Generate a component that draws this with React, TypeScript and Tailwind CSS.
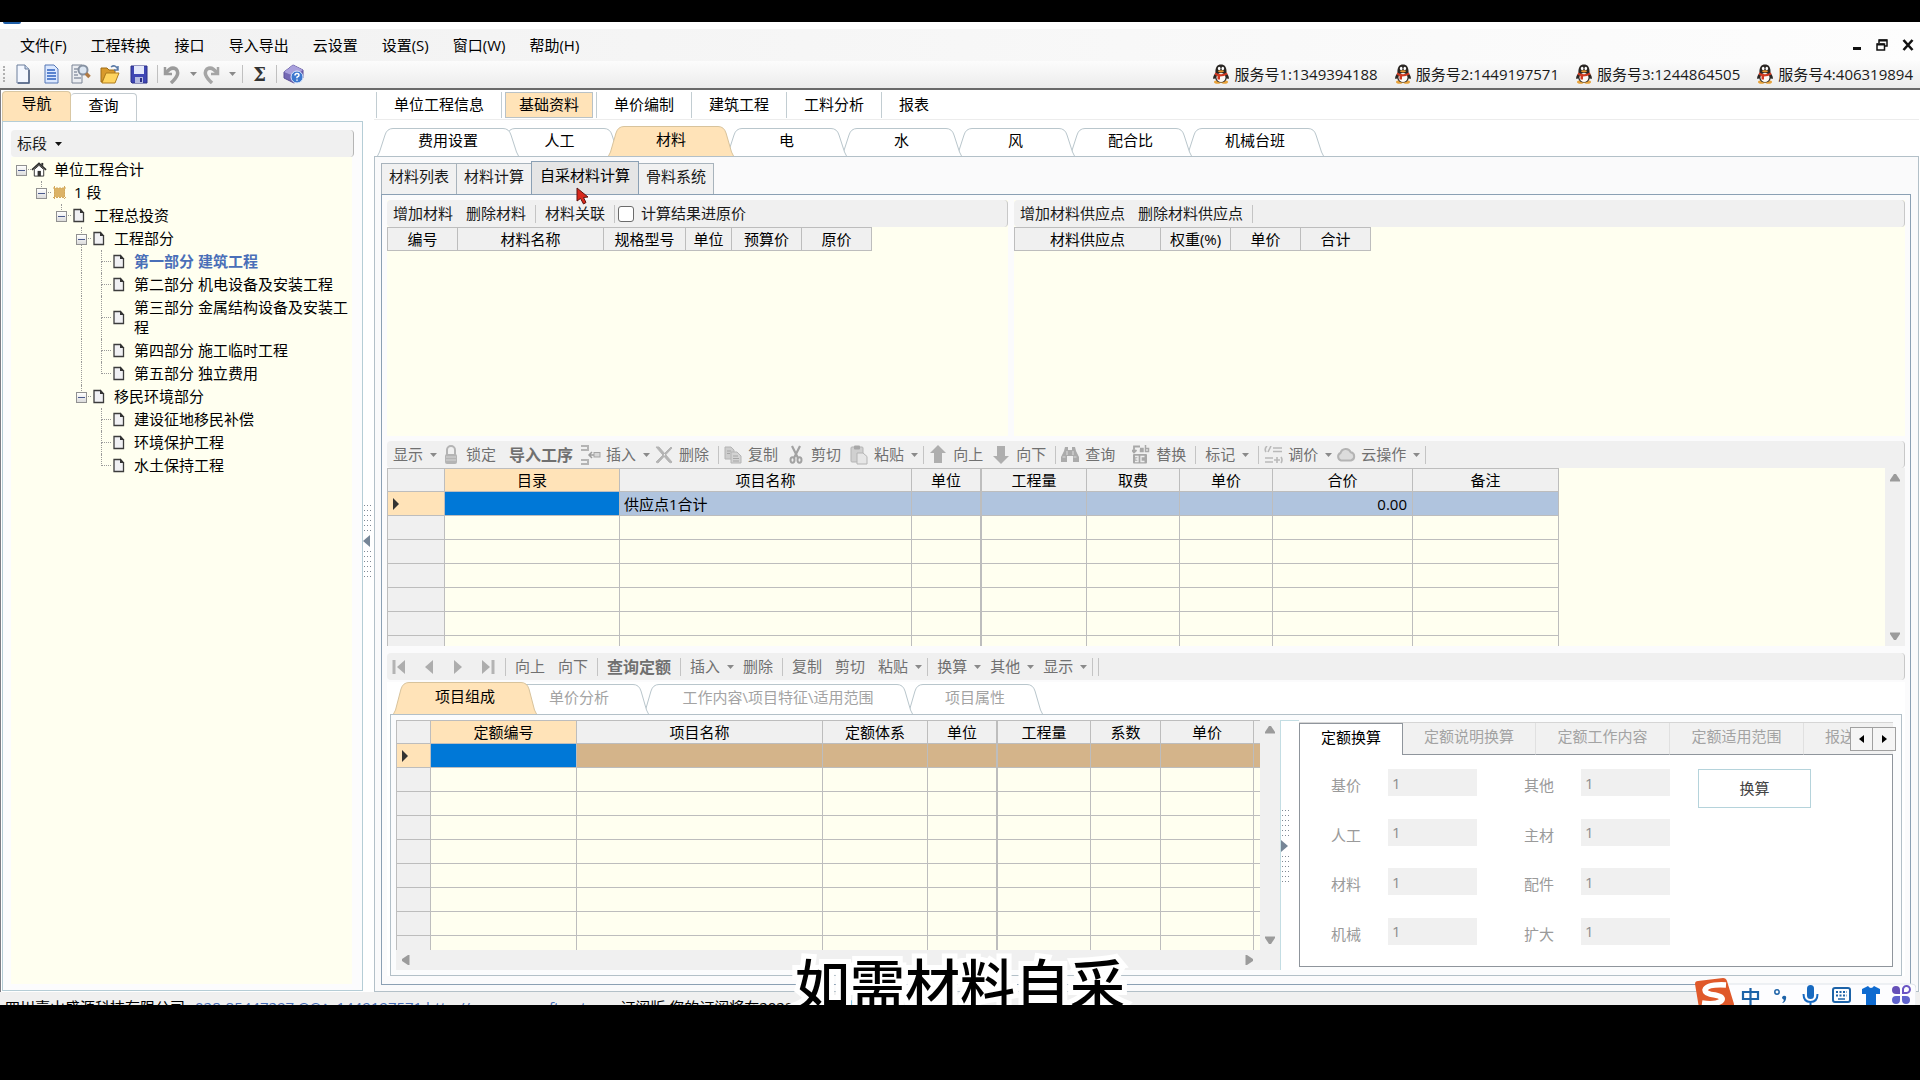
import { ReactNode, useState } from "react";
import clsx from "clsx";

const GRID_LINE = "border-[#bdbdbd]";

/* ---------- small pieces ---------- */

function Caret({ dark }: { dark?: boolean }) {
  return (
    <svg width="7" height="4" viewBox="0 0 7 4" className="shrink-0">
      <path d="M0 0H7L3.5 4Z" fill={dark ? "#111" : "#8a8a8a"} />
    </svg>
  );
}

function Sep() {
  return <span className="mx-[2px] h-[18px] w-px shrink-0 bg-[#c4c4c4]" />;
}

type ToolProps = { children: string; icon?: ReactNode; menu?: boolean; bold?: boolean; dark?: boolean; className?: string };

function Tool({ children, icon, menu, bold, dark, className }: ToolProps) {
  return (
    <button
      className={clsx(
        "flex h-full shrink-0 items-center whitespace-nowrap",
        icon ? "pl-px" : "pl-[6px]",
        menu ? "pr-[2px]" : "pr-[6px]",
        bold ? "text-[16px] font-bold" : "text-[15px]",
        dark ? "text-[#1a1a1a]" : "text-[#707070]",
        className,
      )}
    >
      {icon && <span className="mr-[5px] flex w-5 justify-center">{icon}</span>}
      {children}
      {menu && <span className="ml-[7px]"><Caret /></span>}
    </button>
  );
}

function Toolbar({ children, className }: { children: ReactNode; className?: string }) {
  return (
    <div className={clsx("flex h-[27px] shrink-0 items-center gap-px overflow-hidden rounded-sm border-r border-[#c8c8c8] bg-[#f0f0f0]", className)}>
      {children}
    </div>
  );
}

/* ---------- icons ---------- */

const gray = "#b4b4b4";

const LockIcon = () => (
  <svg width="14" height="20" viewBox="0 0 14 20">
    <path d="M3 10V5a4 4 0 0 1 8 0v5" fill="none" stroke={gray} strokeWidth="2" />
    <rect x="1" y="9" width="12" height="10" rx="2" fill={gray} />
    <path d="M2 12H12M2 15H12" stroke="#d6d6d6" />
  </svg>
);
const InsertIcon = () => (
  <svg width="20" height="20" viewBox="0 0 20 20">
    <path d="M0 1h7v4H0M0 15h7v4H0" fill="none" stroke={gray} strokeWidth="2" />
    <path d="M9 10h5M11 7l-3 3 3 3" fill="none" stroke="#9d9d9d" strokeWidth="1.5" />
    <rect x="13" y="7.500" width="6" height="4.500" fill="#d8d8d8" stroke="#a5a5a5" />
  </svg>
);
const CrossIcon = () => (
  <svg width="18" height="18" viewBox="0 0 18 18">
    <path d="M1 1L4 1 17 16 16 17 14 16ZM16 1L9 8 1 16 3 17 10 9.500 17 2Z" fill={gray} stroke={gray} />
  </svg>
);
const CopyIcon = () => (
  <svg width="18" height="18" viewBox="0 0 18 18">
    <path d="M1 1h6l3 3v9H1z" fill="#cdcdcd" stroke={gray} />
    <path d="M7 6h6l4 4v7H7z" fill="#d3d3d3" stroke={gray} />
    <path d="M9 10h5M9 12.500h6M9 15h6M3 5h4M3 7.500h3" stroke="#a5a5a5" />
  </svg>
);
const CutIcon = () => (
  <svg width="14" height="19" viewBox="0 0 14 19">
    <path d="M3 1L9 13M11 1L5 13" stroke="#a2a2a2" strokeWidth="2.200" />
    <ellipse cx="3.500" cy="15" rx="2" ry="2.700" fill="none" stroke="#a2a2a2" strokeWidth="2" />
    <ellipse cx="10.500" cy="15" rx="2" ry="2.700" fill="none" stroke="#a2a2a2" strokeWidth="2" />
  </svg>
);
const PasteIcon = () => (
  <svg width="18" height="20" viewBox="0 0 18 20">
    <rect x="1" y="2" width="12" height="15" rx="1" fill="#d0d0d0" stroke={gray} />
    <rect x="4" y="0.500" width="6" height="4" rx="1" fill="#a8a8a8" />
    <path d="M7 8h6l4 3.500V19H7z" fill="#e6e6e6" stroke={gray} />
  </svg>
);
const ArrowIcon = ({ down }: { down?: boolean }) => (
  <svg width="16" height="19" viewBox="0 0 16 19">
    <path d={down ? "M8 19L0 11H4V1H12V11H16Z" : "M8 0L16 8H12V18H4V8H0Z"} fill="#aeaeae" />
  </svg>
);
const BinocularsIcon = () => (
  <svg width="18" height="17" viewBox="0 0 18 17">
    <path d="M4 1h3v3h4V1h3l1 4 3 6v5h-6v-6H8.500H6v6H0v-5L3 5z" fill="#ababab" />
    <path d="M1.500 11h3M12.500 11h3M6 5v4M12 5v4" stroke="#dedede" />
  </svg>
);
const ReplaceIcon = () => (
  <svg width="19" height="19" viewBox="0 0 19 19">
    <path d="M8 1.500H2V7M0 5l2 2.500L4.500 5" fill="none" stroke="#a8a8a8" strokeWidth="1.800" />
    <rect x="1" y="9" width="14" height="9.500" rx="1" fill="#a8a8a8" />
    <path d="M3 11.500h3v5H3M3.500 14H6M12.500 11.500H9v5h3.500" fill="none" stroke="#eee" strokeWidth="1.300" />
    <path d="M8 3.500h3v3H8.500V5H11M13.500 0v6.500h3v-3h-3" fill="none" stroke="#a8a8a8" strokeWidth="1.500" />
  </svg>
);
const PriceIcon = () => (
  <svg width="19" height="18" viewBox="0 0 19 18">
    <path d="M3 0Q0 3 2 6M7 0L4 6M9 2H18M9 5.500H18M1 12H9M1 16H9M10 14H16M13 11V17M17 11q2 3 0 6" fill="none" stroke="#b9b9b9" strokeWidth="1.600" />
  </svg>
);
const CloudIcon = () => (
  <svg width="20" height="15" viewBox="0 0 20 15">
    <path d="M5 13.500a4 4 0 0 1-.5-7.500 5.500 5.500 0 0 1 10.300-.7 4.200 4.200 0 0 1 .2 8.200z" fill="#dcdcdc" stroke={gray} strokeWidth="2" />
  </svg>
);
const SkipIcon = ({ bar, right }: { bar?: boolean; right?: boolean }) => (
  <svg width="14" height="16" viewBox="0 0 14 16">
    <g transform={right ? "translate(14 0) scale(-1 1)" : undefined}>
      {bar && <rect x="0.500" y="1" width="3" height="14" fill={gray} />}
      <path d="M13 1V15L5 8Z" fill="#adadad" />
    </g>
  </svg>
);
const DocIcon = () => (
  <svg width="12" height="15" viewBox="0 0 12 15">
    <path d="M1 1.500h6.500L10.500 5v8.500H1z" fill="#f1f1f4" stroke="#3c3c3c" strokeWidth="1.300" />
    <path d="M7 0.500L11.500 5H7z" fill="#333" />
  </svg>
);
const HomeIcon = () => (
  <svg width="17" height="17" viewBox="0 0 17 17">
    <path d="M1 9L8.500 2 16 9" fill="none" stroke="#2e2e2e" strokeWidth="1.800" />
    <path d="M3.500 8.500V15.500H13.500V8.500L8.500 4Z" fill="#fff" stroke="#2e2e2e" />
    <rect x="7" y="10" width="3.500" height="5.500" fill="#333" />
    <path d="M12 1.500v3" stroke="#2e2e2e" strokeWidth="2" />
  </svg>
);
const SectionIcon = () => (
  <svg width="13" height="13" viewBox="0 0 13 13">
    <rect x="1" y="2" width="11" height="9" fill="#dcb366" />
    <path d="M0 2H13M0 11.500H13M1.500 0V13M11.500 0V13" stroke="#d3a95c" strokeDasharray="2 1" />
  </svg>
);
const PenguinIcon = () => (
  <svg width="18" height="20" viewBox="0 0 18 20">
    <ellipse cx="5.500" cy="18" rx="3.500" ry="1.800" fill="#e8a33a" />
    <ellipse cx="12.500" cy="18" rx="3.500" ry="1.800" fill="#e8a33a" />
    <path d="M3.500 9C3 3 5.500.5 9 .5S15 3 14.500 9c2 2.500 3 5 2 6-.7.5-1.500-1-1.500-1-1 3-3 4.500-6 4.500S4 17 3 14c0 0-.8 1.500-1.500 1C.5 14 1.500 11.500 3.500 9z" fill="#2b2724" />
    <ellipse cx="9" cy="13.500" rx="4.500" ry="4.500" fill="#fdfaf6" />
    <ellipse cx="7.200" cy="4.500" rx="1.300" ry="1.800" fill="#fff" />
    <ellipse cx="10.800" cy="4.500" rx="1.300" ry="1.800" fill="#fff" />
    <ellipse cx="9" cy="7.300" rx="3" ry="1.100" fill="#e8962e" />
    <path d="M3 8.500Q9 12 15 8.500L15.500 10.500Q12 12.500 8 12.500V15.500H5.500V12Q4 11.500 2.800 10.500Z" fill="#cf3a22" />
  </svg>
);

const fileIcons: { name: string; icon: ReactNode }[] = [
  {
    name: "新建",
    icon: (
      <>
        <path d="M4 1h8l4 4v14H4z" fill="#f3f7ff" stroke="#6d7f9c" />
        <path d="M12 1v4h4" fill="#c8d6ec" stroke="#6d7f9c" />
        <path d="M16 6v13H5" fill="none" stroke="#4f6283" strokeWidth="1.500" />
      </>
    ),
  },
  {
    name: "文档",
    icon: (
      <>
        <path d="M3 1h9l4 4v14H3z" fill="#dbe8ff" stroke="#5577b5" />
        <path d="M5 6h8M5 9h9M5 12h9M5 15h9" stroke="#2f62c0" strokeWidth="1.500" />
      </>
    ),
  },
  {
    name: "预览",
    icon: (
      <>
        <path d="M1 1h10v18H1z" fill="#eceef2" stroke="#7a8495" />
        <path d="M3 5h4M3 8h3M3 11h4M3 14h7" stroke="#8e98a8" strokeWidth="1.500" />
        <circle cx="12" cy="6" r="4.500" fill="#dce6f2" stroke="#8792a2" strokeWidth="2" />
        <path d="M15 9.500L18.500 13" stroke="#b07a45" strokeWidth="3.500" />
      </>
    ),
  },
  {
    name: "打开",
    icon: (
      <>
        <path d="M1 4h6l2 2h6v4H6L2 18H1z" fill="#d99a2b" stroke="#a06d16" />
        <path d="M6 9h13l-4 10H2z" fill="#ffd45e" stroke="#b07d1c" />
        <path d="M11 3q4-3 7 2M18 2v4h-4" fill="none" stroke="#5b7ba8" strokeWidth="1.500" />
      </>
    ),
  },
  {
    name: "保存",
    icon: (
      <>
        <path d="M2 2h16v17H3l-1-1z" fill="#3f46b4" stroke="#2b2f86" />
        <rect x="5" y="2" width="10" height="8" fill="#e4e8fa" />
        <rect x="6" y="13" width="8" height="6" fill="#b5bbe0" />
        <rect x="11" y="14" width="2" height="4" fill="#2b2f86" />
      </>
    ),
  },
];

/* ---------- navigation tree ---------- */

type Node = { text: string; guides: string; last?: boolean; open?: boolean; root?: boolean; active?: boolean; icon?: ReactNode };

const nodes: Node[] = [
  { text: "单位工程合计", guides: "", open: true, root: true, icon: <HomeIcon /> },
  { text: "1 段", guides: " ", open: true, last: true, icon: <SectionIcon /> },
  { text: "工程总投资", guides: "  ", open: true, last: true },
  { text: "工程部分", guides: "   ", open: true },
  { text: "第一部分 建筑工程", guides: "   |", active: true },
  { text: "第二部分 机电设备及安装工程", guides: "   |" },
  { text: "第三部分 金属结构设备及安装工程", guides: "   |" },
  { text: "第四部分 施工临时工程", guides: "   |" },
  { text: "第五部分 独立费用", guides: "   |", last: true },
  { text: "移民环境部分", guides: "   ", open: true, last: true },
  { text: "建设征地移民补偿", guides: "    " },
  { text: "环境保护工程", guides: "    " },
  { text: "水土保持工程", guides: "    ", last: true },
];

function TreeRow({ node }: { node: Node }) {
  return (
    <li className="flex min-h-[23px] items-stretch">
      {node.guides.split("").map((g, i) => (
        <span key={i} className="flex w-5 shrink-0 pl-[10px]">
          {g === "|" && <span className="border-l border-dotted border-[#9a9a9a]" />}
        </span>
      ))}
      <span className="relative flex w-5 shrink-0 flex-col pl-[10px]">
        <span className={clsx("flex-1 border-b border-dotted border-[#9a9a9a]", !node.root && "border-l")} />
        <span className={clsx("flex-1 border-dotted border-[#9a9a9a]", !node.root && !node.last && "border-l")} />
        {node.open && (
          <button aria-label="折叠" className="absolute top-[7px] left-[5px] flex h-[11px] w-[11px] items-center justify-center border border-[#919191] bg-gradient-to-b from-white to-[#dcdcdc]">
            <span className="h-px w-[7px] bg-[#4b5a8c]" />
          </button>
        )}
      </span>
      <span className="flex w-[16px] shrink-0 items-center justify-center">{node.icon ?? <DocIcon />}</span>
      <a
        href="#"
        className={clsx(
          "ml-[7px] pt-px pb-[2px] text-[15px] leading-[20px]",
          node.active ? "font-bold text-[#4a6fb8]" : "text-black",
        )}
      >
        {node.text}
      </a>
    </li>
  );
}

/* ---------- slanted tabs ---------- */

type SlantTab = { text: string; w: number; overlap: string };

function SlantTabs({ tabs, active, h, muted, onPick }: { tabs: SlantTab[]; active: number; h: number; muted?: boolean; onPick: (i: number) => void }) {
  return (
    <div role="tablist" className="flex items-end pl-[3px]">
      {tabs.map((t, i) => {
        const on = i === active;
        const th = on ? h : h - 2;
        return (
          <button
            key={t.text}
            role="tab"
            aria-selected={on}
            onClick={() => onPick(i)}
            className={clsx("relative shrink-0 pb-[3px] text-[15px]", t.overlap, muted && !on ? "text-[#a3a3a3]" : "text-black")}
            style={{ width: t.w, height: th, zIndex: on ? 20 : 10 - i }}
          >
            <svg width={t.w} height={th} className="absolute inset-0">
              <path
                d={`M0.5 ${th} L2.5 ${th - 4} L8 7 Q10 0.5 16 0.5 H${t.w - 16} Q${t.w - 10} 0.5 ${t.w - 8} 7 L${t.w - 2.5} ${th - 4} L${t.w - 0.5} ${th}`}
                fill={on ? "#ffe3b8" : "#fff"}
                stroke={on ? "#d8c39c" : "#b9c6cc"}
              />
            </svg>
            <span className="relative">{t.text}</span>
          </button>
        );
      })}
    </div>
  );
}

/* ---------- grids ---------- */

type Col = { title: string; w: number; thick?: boolean };

type GridProps = { cols: Col[]; rows?: number; selector?: boolean; highlight?: string; values?: Record<string, string> };

function Grid({ cols, rows = 0, selector, highlight, values = {} }: GridProps) {
  const total = cols.reduce((s, c) => s + c.w, 1);
  return (
    <table className={clsx("table-fixed border-separate border-spacing-0 border-t border-l text-[15px] leading-[20px]", GRID_LINE)} style={{ width: total }}>
      <colgroup>
        {cols.map((c, i) => (
          <col key={i} style={{ width: c.w }} />
        ))}
      </colgroup>
      <thead>
        <tr className="h-[23px]">
          {cols.map((c, i) => (
            <th
              key={i}
              className={clsx("overflow-hidden border-r border-b p-0 font-normal whitespace-nowrap", GRID_LINE, c.thick && "border-r-2", selector && i === 1 ? "bg-[#ffe3b8]" : "bg-[#f0f0f0]")}
            >
              {c.title}
            </th>
          ))}
        </tr>
      </thead>
      <tbody>
        {Array.from({ length: rows }, (_, r) => (
          <tr key={r} className="h-[24px]">
            {cols.map((c, i) => (
              <td
                key={i}
                className={clsx(
                  "border-r border-b p-0",
                  GRID_LINE,
                  c.thick && "border-r-2",
                  r === 0 && i === 0 && "bg-[#ffe3b8]",
                  r === 0 && i === 1 && "bg-[#0078d7]",
                  r === 0 && i > 1 && highlight,
                  r > 0 && (i === 0 ? "bg-[#f0f0f0]" : "bg-[#fffff0]"),
                )}
              >
                {r === 0 && i === 0 && (
                  <svg width="6" height="12" viewBox="0 0 6 12" className="ml-[5px]">
                    <path d="M0 0L6 6L0 12Z" fill="#333" />
                  </svg>
                )}
                {r === 0 && values[c.title] && (
                  <span className={clsx("block", c.title === "合价" ? "pr-[5px] text-right" : "pl-[4px]")}>{values[c.title]}</span>
                )}
              </td>
            ))}
          </tr>
        ))}
      </tbody>
    </table>
  );
}

const Tri = ({ d }: { d: string }) => (
  <svg width="10" height="10" viewBox="0 0 10 10">
    <path d={d} fill="#9b9b9b" />
  </svg>
);

function VScroll() {
  return (
    <div className="flex w-5 shrink-0 flex-col items-center justify-between bg-[#f0f0f0] py-[5px]">
      <Tri d="M0 8.500V7L4 1H6L10 7V8.500Z" />
      <Tri d="M0 1.500V3L4 9H6L10 3V1.500Z" />
    </div>
  );
}

const GripDots = () => (
  <svg width="9" height="26" viewBox="0 0 9 26" shapeRendering="crispEdges">
    <path d="M1 0V26M4 0V26M7 0V26" stroke="#7f8994" strokeWidth="1" strokeDasharray="1 4" transform="translate(0.5 0)" />
  </svg>
);

function Splitter({ right }: { right?: boolean }) {
  return (
    <div className="flex flex-col items-start justify-center gap-[4px]">
      <GripDots />
      <svg width="7" height="12" viewBox="0 0 7 12">
        <path d={right ? "M0 0L7 6L0 12Z" : "M7 0L0 6L7 12Z"} fill="#758596" />
      </svg>
      <GripDots />
    </div>
  );
}

/* ---------- data ---------- */

const menus = ["文件(F)", "工程转换", "接口", "导入导出", "云设置", "设置(S)", "窗口(W)", "帮助(H)"];
const services = ["服务号1:1349394188", "服务号2:1449197571", "服务号3:1244864505", "服务号4:406319894"];
const sections = ["单位工程信息", "基础资料", "单价编制", "建筑工程", "工料分析", "报表"];
const baseTabs: SlantTab[] = [
  { text: "费用设置", w: 142, overlap: "" },
  { text: "人工", w: 121, overlap: "-ml-5" },
  { text: "材料", w: 126, overlap: "-ml-3" },
  { text: "电", w: 121, overlap: "-ml-2" },
  { text: "水", w: 121, overlap: "-ml-[6px]" },
  { text: "风", w: 119, overlap: "-ml-[6px]" },
  { text: "配合比", w: 123, overlap: "-ml-[6px]" },
  { text: "机械台班", w: 138, overlap: "-ml-[6px]" },
];
const detailTabs: SlantTab[] = [
  { text: "项目组成", w: 144, overlap: "" },
  { text: "单价分析", w: 140, overlap: "-ml-7" },
  { text: "工作内容\\项目特征\\适用范围", w: 270, overlap: "-ml-[6px]" },
  { text: "项目属性", w: 136, overlap: "-ml-[6px]" },
];
const materialTabs = ["材料列表", "材料计算", "自采材料计算", "骨料系统"];
const convertTabs = [
  { text: "定额换算", w: "w-[104px]" },
  { text: "定额说明换算", w: "w-[133px]" },
  { text: "定额工作内容", w: "w-[134px]" },
  { text: "定额适用范围", w: "w-[134px]" },
];
const factors = ["基价", "其他", "人工", "主材", "材料", "配件", "机械", "扩大"];

const materialCols: Col[] = [
  { title: "编号", w: 70 },
  { title: "材料名称", w: 146 },
  { title: "规格型号", w: 82 },
  { title: "单位", w: 46 },
  { title: "预算价", w: 70 },
  { title: "原价", w: 70 },
];
const supplyCols: Col[] = [
  { title: "材料供应点", w: 146 },
  { title: "权重(%)", w: 70 },
  { title: "单价", w: 70 },
  { title: "合计", w: 70 },
];
const itemCols: Col[] = [
  { title: "", w: 57 },
  { title: "目录", w: 175 },
  { title: "项目名称", w: 292 },
  { title: "单位", w: 70, thick: true },
  { title: "工程量", w: 105 },
  { title: "取费", w: 93 },
  { title: "单价", w: 93 },
  { title: "合价", w: 140 },
  { title: "备注", w: 146 },
];
const quotaCols: Col[] = [
  { title: "", w: 34 },
  { title: "定额编号", w: 146 },
  { title: "项目名称", w: 246 },
  { title: "定额体系", w: 105 },
  { title: "单位", w: 70, thick: true },
  { title: "工程量", w: 93 },
  { title: "系数", w: 70 },
  { title: "单价", w: 93 },
  { title: "", w: 70 },
];

/* ---------- page parts ---------- */

function TopBars() {
  return (
    <header className="shrink-0">
      <div className="flex h-[7px] items-start bg-white pl-[3px]">
        <span className="h-[2px] w-[18px] rounded-b-sm bg-[#1f5fa8]" />
      </div>
      <div className="flex h-8 items-center bg-gradient-to-r from-[#f1f1f1] to-[#fdfdfd] pr-[6px] pl-5">
        <nav className="flex gap-6 text-[15px]">
          {menus.map((m) => (
            <button key={m}>{m}</button>
          ))}
        </nav>
        <div className="ml-auto flex items-center gap-[14px]">
          <button aria-label="最小化">
            <svg width="10" height="12"><rect x="1" y="8" width="8" height="3" fill="#111" /></svg>
          </button>
          <button aria-label="还原">
            <svg width="12" height="12" viewBox="0 0 12 12">
              <path d="M3 4V1H11V7H9M1 5H8.500V11H1Z" fill="none" stroke="#111" strokeWidth="1.500" />
              <path d="M3 1.500H11M1 5.500H8" stroke="#111" strokeWidth="2" />
            </svg>
          </button>
          <button aria-label="关闭">
            <svg width="12" height="12" viewBox="0 0 12 12"><path d="M1.500 1L10.500 11M10.500 1L1.500 11" stroke="#111" strokeWidth="2.600" /></svg>
          </button>
        </div>
      </div>
      <div className="flex h-[29px] items-center border-b-2 border-[#6a6a6a] bg-gradient-to-b from-[#fcfcfc] to-[#ececec] pr-[7px] pb-px pl-[3px]">
        <span className="h-[16px] border-l-2 border-dotted border-[#b0b0b0]" />
        <div className="ml-[8px] flex items-center gap-[9px]">
          {fileIcons.map((f) => (
            <button key={f.name} aria-label={f.name}>
              <svg width="20" height="20" viewBox="0 0 20 20">{f.icon}</svg>
            </button>
          ))}
        </div>
        <span className="ml-[8px] h-[18px] w-px bg-[#c0c0c0]" />
        <button aria-label="撤销" className="ml-[5px] flex items-center gap-[9px]">
          <svg width="18" height="19" viewBox="0 0 18 19">
            <path d="M2 2v7h7" fill="none" stroke="#9b9b9b" strokeWidth="2.500" />
            <path d="M3 8Q8 1 13 4Q18 9 8 18" fill="none" stroke="#9b9b9b" strokeWidth="3.500" />
          </svg>
          <Caret />
        </button>
        <button aria-label="重做" className="ml-[5px] flex items-center gap-[9px]">
          <svg width="18" height="19" viewBox="0 0 18 19">
            <path d="M16 2v7H9" fill="none" stroke="#a5a5a5" strokeWidth="2.500" />
            <path d="M15 8Q10 1 5 4Q0 9 10 18" fill="none" stroke="#a5a5a5" strokeWidth="3.500" />
          </svg>
          <Caret />
        </button>
        <span className="ml-[6px] h-[18px] w-px bg-[#c0c0c0]" />
        <button className="w-[33px] font-['DejaVu_Serif',serif] text-[18px] font-bold text-[#333]">Σ</button>
        <span className="h-[18px] w-px bg-[#c0c0c0]" />
        <button aria-label="帮助" className="ml-[6px]">
          <svg width="21" height="20" viewBox="0 0 21 20">
            <path d="M1 8L10 1 20 6V14L11 19 1 14Z" fill="#7468b4" stroke="#5a4f98" />
            <path d="M1 8L10 1 20 6 11 12Z" fill="#a9a0dc" />
            <circle cx="14" cy="13" r="6" fill="#3d78cf" stroke="#d9e6fb" />
            <path d="M12 11.500q0-2 2-2t2 1.700q0 1-2 2v1M14 15.500v1.200" fill="none" stroke="#fff" strokeWidth="1.500" />
          </svg>
        </button>
        <div className="ml-auto flex items-center gap-4 text-[15px]">
          {services.map((s) => (
            <a key={s} href="#" className="flex items-center gap-[4px] whitespace-nowrap text-[#1a1a1a]">
              <PenguinIcon />
              {s}
            </a>
          ))}
        </div>
      </div>
    </header>
  );
}

function Sidebar() {
  return (
    <aside className="flex w-[363px] shrink-0 flex-col border-l border-[#7c7c84] bg-white pt-px pb-px pl-px">
      <div role="tablist" className="flex h-[30px] items-end text-[15px]">
        <button role="tab" aria-selected="true" className="h-[30px] w-[69px] rounded-t border border-b-0 border-[#d9c7a3] bg-[#ffe3b8] pb-[6px]">
          导航
        </button>
        <button role="tab" aria-selected="false" className="h-[28px] w-[66px] rounded-t border border-b-0 border-l-0 border-[#c3cbd0] bg-white pb-[6px]">
          查询
        </button>
      </div>
      <div className="flex flex-1 flex-col border border-[#b5cdd6] bg-[#fcfcfd] px-[8px] pt-[8px] pb-[6px]">
        <div className="flex h-[27px] items-center rounded-sm border-r border-[#b5b5b5] bg-[#f0f0f0]">
          <button className="flex items-center gap-[8px] pl-[6px] text-[15px] text-[#1a1a1a]">
            标段 <Caret dark />
          </button>
        </div>
        <ul className="mr-[2px] flex-1 bg-[#fffff0] pt-px">
          {nodes.map((n) => (
            <TreeRow key={n.text} node={n} />
          ))}
        </ul>
      </div>
    </aside>
  );
}

function MaterialPanels() {
  return (
    <div className="flex h-[236px] shrink-0 gap-[6px]">
      <section className="flex w-[621px] shrink-0 flex-col bg-[#fffff0]">
        <Toolbar>
          <Tool dark>增加材料</Tool>
          <Tool dark>删除材料</Tool>
          <Sep />
          <Tool dark>材料关联</Tool>
          <Sep />
          <label className="flex items-center gap-[7px] text-[15px] text-[#1a1a1a]">
            <input type="checkbox" className="h-[16px] w-[16px] appearance-none rounded-[3px] border border-[#6b6b6b] bg-white" />
            计算结果进原价
          </label>
        </Toolbar>
        <Grid cols={materialCols} />
      </section>
      <section className="flex flex-1 flex-col bg-[#fffff0]">
        <Toolbar>
          <Tool dark>增加材料供应点</Tool>
          <Tool dark>删除材料供应点</Tool>
          <Sep />
        </Toolbar>
        <Grid cols={supplyCols} />
      </section>
    </div>
  );
}

function ItemPanel() {
  return (
    <section className="mt-[5px] flex shrink-0 flex-col">
      <Toolbar>
        <Tool menu>显示</Tool>
        <Tool icon={<LockIcon />}>锁定</Tool>
        <Tool bold>导入工序</Tool>
        <Tool icon={<InsertIcon />} menu>插入</Tool>
        <Tool icon={<CrossIcon />}>删除</Tool>
        <Sep />
        <Tool icon={<CopyIcon />}>复制</Tool>
        <Tool icon={<CutIcon />}>剪切</Tool>
        <Tool icon={<PasteIcon />} menu>粘贴</Tool>
        <Sep />
        <Tool icon={<ArrowIcon />}>向上</Tool>
        <Tool icon={<ArrowIcon down />}>向下</Tool>
        <Sep />
        <Tool icon={<BinocularsIcon />} className="mr-2">查询</Tool>
        <Tool icon={<ReplaceIcon />}>替换</Tool>
        <Sep />
        <Tool menu className="mr-1">标记</Tool>
        <Sep />
        <Tool icon={<PriceIcon />} menu>调价</Tool>
        <Tool icon={<CloudIcon />} menu>云操作</Tool>
        <Sep />
      </Toolbar>
      <div className="flex h-[178px]">
        <div className="min-w-0 flex-1 overflow-hidden bg-[#fffff0]">
          <Grid cols={itemCols} rows={7} selector highlight="bg-[#b0c4de]" values={{ 项目名称: "供应点1合计", 合价: "0.00" }} />
        </div>
        <VScroll />
      </div>
    </section>
  );
}

function ConvertPanel() {
  return (
    <div className="flex min-w-0 flex-1 flex-col pt-[2px] pr-[3px] pb-[3px]">
      <div role="tablist" className="relative z-10 -mb-px flex h-[33px] border-t border-[#d5d5d5] bg-[#f1f1f1] text-[15px]">
        {convertTabs.map((t, i) => (
          <button
            key={t.text}
            role="tab"
            aria-selected={i === 0}
            className={clsx(
              "shrink-0 pb-[4px]",
              t.w,
              i === 0 ? "border-x border-t border-[#8f959c] bg-white text-black" : "border-r border-b border-r-[#e0e0e0] border-b-[#8f959c] text-[#a3a3a3]",
            )}
          >
            {t.text}
          </button>
        ))}
        <button role="tab" aria-selected="false" className="flex-1 overflow-hidden border-b border-[#8f959c] pb-[4px] pl-[21px] text-left whitespace-nowrap text-[#a3a3a3]">
          报送
        </button>
        <div className="absolute top-[4px] -right-[3px] flex h-[24px]">
          <button aria-label="向左" className="flex w-[23px] items-center justify-center border border-[#a0a0a0] bg-[#f5f5f5]">
            <svg width="5" height="8"><path d="M5 0L0 4L5 8Z" fill="#000" /></svg>
          </button>
          <button aria-label="向右" className="flex w-[23px] items-center justify-center border border-l-0 border-[#a0a0a0] bg-[#f5f5f5]">
            <svg width="5" height="8"><path d="M0 0L5 4L0 8Z" fill="#000" /></svg>
          </button>
        </div>
      </div>
      <div className="flex flex-1 items-start border border-t-0 border-[#8f959c] bg-white pt-[15px] pl-[31px] text-[15px]">
        <div className="grid grid-cols-[146px_90px] gap-x-[47px] gap-y-[22px]">
          {factors.map((f) => (
            <label key={f} className="flex items-center text-[#9a9a9a]">
              <span className="w-[57px] shrink-0 pt-[5px]">{f}</span>
              <input defaultValue="1" disabled className="h-[27px] w-[89px] shrink-0 border-2 border-[#f0f0f0] bg-[#f0f0f0] px-[2px] text-[#8d8d8d]" />
            </label>
          ))}
        </div>
        <button className="ml-[84px] h-[39px] w-[113px] border border-[#b5d3db] bg-white text-[#444]">换算</button>
      </div>
    </div>
  );
}

function DetailPanel() {
  const [tab, setTab] = useState(0);
  return (
    <section className="mt-[7px] flex min-h-0 flex-1 flex-col">
      <Toolbar>
        <button aria-label="第一条" className="w-[26px] pl-[5px]"><SkipIcon bar /></button>
        <button aria-label="上一条" className="w-[26px] pl-[6px]"><SkipIcon /></button>
        <button aria-label="下一条" className="w-[30px] pl-[12px]"><SkipIcon right /></button>
        <button aria-label="最后一条" className="w-[30px] pl-[9px]"><SkipIcon bar right /></button>
        <Sep />
        <Tool>向上</Tool>
        <Tool>向下</Tool>
        <Sep />
        <Tool bold>查询定额</Tool>
        <Sep />
        <Tool menu>插入</Tool>
        <Tool>删除</Tool>
        <Sep />
        <Tool>复制</Tool>
        <Tool>剪切</Tool>
        <Tool menu>粘贴</Tool>
        <Sep />
        <Tool menu>换算</Tool>
        <Tool menu>其他</Tool>
        <Tool menu>显示</Tool>
        <Sep />
        <Sep />
      </Toolbar>
      <div className="mt-[2px] flex flex-1 flex-col bg-white px-[3px]">
        <SlantTabs tabs={detailTabs} active={tab} h={32} muted onPick={setTab} />
        <div className="flex flex-1 border border-[#b3c0c8] bg-[#fbfcfd] p-[5px]">
          <div className="flex w-[884px] shrink-0 flex-col bg-[#f0f0f0]">
            <div className="flex h-[230px]">
              <div className="min-w-0 flex-1 overflow-hidden bg-[#fffff0]">
                <Grid cols={quotaCols} rows={9} selector highlight="bg-[#d4b48a]" />
              </div>
              <VScroll />
            </div>
            <div className="flex flex-1 items-center justify-between pr-[26px] pl-[5px]">
              <Tri d="M8.500 0H7L1 4V6L7 10H8.500Z" />
              <Tri d="M1.500 0H3L9 4V6L3 10H1.500Z" />
            </div>
          </div>
          <div className="flex w-[19px] shrink-0 border-t border-l border-[#c3dde3] bg-white">
            <Splitter right />
          </div>
          <ConvertPanel />
        </div>
      </div>
    </section>
  );
}

function Workspace() {
  const [tab, setTab] = useState(2);
  return (
    <main className="mr-px flex min-w-0 flex-1 flex-col">
      <nav className="flex h-[30px] items-center border-b border-[#ececec] pl-[2px] text-[15px]">
        {sections.map((s) => (
          <div key={s} className="flex h-[26px] items-center border-l border-[#c2cdd2] px-[3px]">
            <button className={clsx("h-full border px-[13px]", s === "基础资料" ? "border-[#b9c2c6] bg-[#ffe3b8]" : "border-transparent")}>
              {s}
            </button>
          </div>
        ))}
      </nav>
      <div className="mt-[6px]">
        <SlantTabs tabs={baseTabs} active={tab} h={30} onPick={setTab} />
      </div>
      <div className="flex flex-1 flex-col border border-[#b3c0c8] bg-[#fafafb] pt-[4px] pr-[7px] pb-[6px] pl-[6px]">
        <div role="tablist" className="flex h-[33px] shrink-0 items-end text-[15px]">
          {materialTabs.map((t, i) => (
            <button
              key={t}
              role="tab"
              aria-selected={i === 2}
              className={clsx(
                "border border-b-0 pb-[5px]",
                i === 2
                  ? "h-[33px] border-[#8ba0b4] bg-[#e5e5e5] px-[8px] text-black"
                  : "h-[31px] border-[#a8b3bc] bg-[#f1f1f1] px-[7px] text-[#1a1a1a]",
                i < 2 && "border-r-0",
                i === 3 && "border-l-0",
              )}
            >
              {t}
            </button>
          ))}
        </div>
        <div className="flex flex-1 flex-col border border-[#8ba0b4] bg-[#fbfbfc] px-[5px] pt-[5px] pb-[8px]">
          <MaterialPanels />
          <ItemPanel />
          <DetailPanel />
        </div>
      </div>
    </main>
  );
}

function ImeBar() {
  return (
    <svg width="221" height="30" viewBox="0 0 221 30" className="absolute right-[4px] -bottom-[3px] z-20">
      <rect x="8" y="6" width="213" height="30" rx="4" fill="#fdfdff" stroke="#dfe4ea" />
      <path d="M0 6Q0 3 3 3L28 0Q31 0 32 3L39 26Q39 30 35 30H4Z" fill="#e0592a" />
      <path d="M31 7Q12 6 10 12Q10 16 20 17Q30 19 26 23Q20 27 7 25" fill="none" stroke="#fff" strokeWidth="5.500" />
      <path d="M48 14h15v7H48zM55.500 10v20" fill="none" stroke="#1d63a8" strokeWidth="2.200" />
      <circle cx="82" cy="14" r="2.200" fill="none" stroke="#1d63a8" strokeWidth="1.500" />
      <path d="M88 18q4-1 3 3t-4 4q3-3 1-4t0-3z" fill="#1d63a8" />
      <rect x="112" y="7" width="7" height="14" rx="3.500" fill="#1769c0" />
      <path d="M108.500 16q0 8 7 8t7-8M115.500 24v5" fill="none" stroke="#1769c0" strokeWidth="2" />
      <rect x="138" y="10" width="17" height="14" rx="2" fill="none" stroke="#1d63a8" strokeWidth="2" />
      <path d="M141 14h11M141 17.500h11" stroke="#1d63a8" strokeWidth="2" strokeDasharray="2 1.500" />
      <path d="M143 21h7" stroke="#1d63a8" strokeWidth="1.500" />
      <path d="M167 11l6-3q3 4 6 0l6 3v5h-4v12h-10V16h-4z" fill="#0f6bd0" />
      <path d="M205 16h-4a4 4 0 1 1 4-4z" fill="#6650b8" />
      <path d="M208 15V12a3.500 3.500 0 1 1 3.500 3z" fill="none" stroke="#6a55c4" strokeWidth="2" />
      <path d="M205 18v4a4 4 0 1 1-4-4zM207 18h4a4 4 0 1 1-4 4z" fill="#5f62cc" />
    </svg>
  );
}

export default function App() {
  return (
    <div className="flex min-h-screen flex-col bg-black font-['Open_Sans','Noto_Sans_CJK_SC',sans-serif] text-black">
      <div className="relative mt-[22px] mb-[75px] flex flex-1 flex-col overflow-hidden bg-white">
        <TopBars />
        <div className="flex flex-1 items-stretch">
          <Sidebar />
          <div className="flex w-[11px] shrink-0">
            <Splitter />
          </div>
          <Workspace />
        </div>
        <footer className="flex h-[13px] shrink-0 overflow-hidden bg-[#f0f0f0] pt-[5px] pl-[5px] text-[15px] leading-[20px] whitespace-nowrap">
          <span>四川嘉山盛源科技有限公司</span>
          <a href="#" className="ml-[10px] text-[#4a6fb8]">028-85447297 QQ：1449197571 http://www.cnysoft.net</a>
          <span className="ml-[34px]">订阅版 您的订阅将在2022-12-31到期</span>
        </footer>

        <svg width="14" height="18" viewBox="0 0 14 18" className="absolute top-[165px] left-[576px] z-30">
          <path d="M1 1V14L4.500 11.500 7.500 17 10 15.500 7.500 10.500 12 10Z" fill="#d8281c" stroke="#5e1410" />
        </svg>
        <p className="absolute inset-x-0 -bottom-[9px] z-20 text-center text-[55px] leading-[60px] font-medium [-webkit-text-stroke:10px_white] [paint-order:stroke_fill]">
          如需材料自采
        </p>
        <ImeBar />
      </div>
    </div>
  );
}
